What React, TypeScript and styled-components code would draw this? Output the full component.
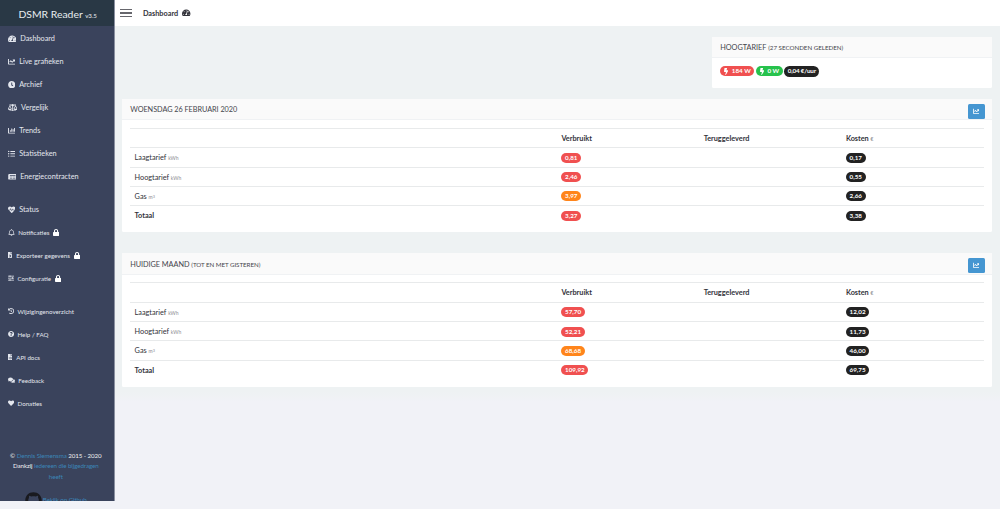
import React from "react";
import styled, { createGlobalStyle } from "styled-components";
import {
  FaTachometerAlt, FaChartLine, FaClock, FaBalanceScale, FaChartBar, FaListUl, FaNewspaper,
  FaHeartbeat, FaRegBell, FaFileExcel, FaHistory, FaQuestionCircle, FaFileCode,
  FaComments, FaHeart, FaLock, FaBolt, FaGithub,
} from "react-icons/fa";

const GlobalStyle = createGlobalStyle`
  *, *::before, *::after { box-sizing: border-box; }
  body {
    margin: 0;
    background: #f1f2f7;
    color: #32323a;
    font-family: Lato, "Open Sans", sans-serif;
    font-size: 7.3px;
    overflow: hidden;
  }
`;

const Page = styled.div`
  display: flex;
  height: 509px;
  align-items: flex-start;
`;

const Sidebar = styled.aside`
  width: 115px;
  height: 500.6px;
  flex: none;
  overflow: hidden;
  border-right: 1px solid #8a90a0;
  background: #3a435c;
  color: #e4e7ee;
`;

const Brand = styled.div`
  height: 26px;
  padding: 1.5px 0 0 1.4px;
  display: flex;
  align-items: baseline;
  justify-content: center;
  line-height: 24px;
  background: #293845;
  color: #e8edf0;
  font-size: 10.4px;
  white-space: pre;
`;

const Version = styled.span`
  font-size: 6.2px;
`;

const Menu = styled.nav<{ $small?: boolean; $gap: number }>`
  margin-top: ${(p) => p.$gap}px;
  font-size: ${(p) => (p.$small ? 6.2 : 7.3)}px;
`;

const MenuItem = styled.a`
  display: flex;
  align-items: center;
  height: 23px;
  padding-left: 7.8px;
  white-space: nowrap;
`;

const IconSlot = styled.span<{ $width: number; $size: number; $ratio: number }>`
  display: flex;
  flex: none;
  width: ${(p) => p.$width}px;
  font-size: ${(p) => p.$size}px;
  svg { flex: none; width: ${(p) => p.$ratio}em; }
`;

const LockSlot = styled.span`
  display: flex;
  margin-left: 3.8px;
  font-size: 7px;
  color: #fff;
  svg { width: 0.875em; }
`;

const Credits = styled.div`
  margin-top: 36px;
  padding-right: 2.4px;
  text-align: center;
  font-size: 6.2px;
  letter-spacing: -0.08px;
  line-height: 10.4px;
  color: #f0f0f2;
`;

const Link = styled.a`
  color: #3a86b8;
`;

const GithubLine = styled.div`
  display: flex;
  justify-content: center;
  align-items: center;
  margin-top: 10px;
  gap: 1px;
  svg { color: #191a1f; }
`;

const Main = styled.main`
  flex: 1;
  min-width: 0;
`;

const TopBar = styled.header`
  display: flex;
  align-items: center;
  height: 26px;
  padding-left: 5.3px;
  background: #fff;
  font-size: 7.3px;
  font-weight: 700;
`;

const Burger = styled.span`
  display: flex;
  flex-direction: column;
  gap: 2px;
  width: 12px;
  margin-right: 10.6px;
  i { height: 1.4px; background: #66666c; }
  i + i { margin-top: 0.4px; }
`;

const TopIcon = styled.span`
  display: flex;
  margin-left: 4.2px;
  font-size: 7.5px;
  svg { width: 1.125em; }
`;

const Content = styled.div`
  display: flex;
  flex-direction: column;
  height: 376px;
  padding: 10.6px 8px 0 7.4px;
  background: linear-gradient(#eef2f3 366px, #f1f2f7);
`;

const Panel = styled.section<{ $height: number; $gap?: number; $narrow?: boolean }>`
  flex: none;
  height: ${(p) => p.$height}px;
  width: ${(p) => (p.$narrow ? "279.6px" : "auto")};
  align-self: ${(p) => (p.$narrow ? "flex-end" : "stretch")};
  margin-bottom: ${(p) => p.$gap ?? 0}px;
  background: #fff;
  border-radius: 1.5px;
`;

const PanelHead = styled.header`
  display: flex;
  align-items: center;
  justify-content: space-between;
  height: 21.7px;
  padding: 0 7.5px 0 7.8px;
  background: #fafafa;
  border-bottom: 1px solid #f0f2f4;
  color: #45454c;
`;

const Title = styled.h2<{ $wide?: boolean }>`
  margin: 0;
  padding-top: 1px;
  font-size: 7.3px;
  font-weight: 400;
  letter-spacing: ${(p) => (p.$wide ? "0" : "-0.04px")};
  small { font-size: 6.2px; }
`;

const ChartButton = styled.button`
  display: flex;
  align-items: center;
  justify-content: center;
  width: 17px;
  height: 15px;
  margin-top: 4.2px;
  padding: 0;
  border: 0;
  border-radius: 1.5px;
  background: #4596d1;
  color: #fff;
  font-size: 6.6px;
`;

const Readings = styled.div`
  display: flex;
  align-items: center;
  gap: 1.6px;
  padding: 7.6px 8px 0;
`;

const Table = styled.div`
  margin: 7.6px 8px 0;
`;

const Row = styled.div<{ $bold?: boolean }>`
  display: grid;
  grid-template-columns: 3fr 1fr 1fr 1fr;
  align-items: center;
  height: 19.3px;
  border-top: 1px solid #e8eaeb;
  font-weight: ${(p) => (p.$bold ? 700 : 400)};
  & + & { padding-top: 0.8px; }
`;

const Cell = styled.div`
  padding-left: 4.2px;
  white-space: nowrap;
`;

const Unit = styled.small`
  font-size: 5px;
  font-weight: 400;
  color: #88888e;
`;

const Cube = styled.span`
  font-size: 3.8px;
  vertical-align: 1.5px;
  line-height: 0;
`;

const Badge = styled.span<{ $color: string; $tall?: boolean }>`
  display: inline-flex;
  align-items: center;
  height: ${(p) => (p.$tall ? 11 : 10)}px;
  padding: 0 ${(p) => (p.$tall ? 3.2 : 3.7)}px;
  border-radius: 6px;
  background: ${(p) => p.$color};
  color: #fff;
  font-size: 6.25px;
  font-weight: 700;
  letter-spacing: ${(p) => (p.$tall ? "-0.14px" : "0")};
  line-height: 1;
  vertical-align: middle;
  white-space: nowrap;
  svg { width: 0.625em; margin-right: 3.4px; font-size: 7px; }
`;

const RED = "#f05050";
const ORANGE = "#ff851b";
const GREEN = "#27c24c";
const BLACK = "#222222";

/* Three tracks with a knob on each */
function Sliders() {
  return (
    <svg viewBox="0 0 16 16" height="1em" fill="currentColor">
      <path d="M0 2h16v2H0zM0 7h16v2H0zM0 12h16v2H0z" />
      <path d="M4 1h2.4v4H4zM10.6 6H13v4h-2.4zM4 11h2.4v4H4z" />
    </svg>
  );
}

/* ratio is the width of the icon relative to its height */
type Item = {
  icon: React.ComponentType;
  label: string;
  slot: number;
  ratio?: number;
  size?: number;
  locked?: boolean;
};

const mainItems: Item[] = [
  { icon: FaTachometerAlt, label: "Dashboard", slot: 12.4, ratio: 1.125 },
  { icon: FaChartLine, label: "Live grafieken", slot: 11.4 },
  { icon: FaClock, label: "Archief", slot: 11.4 },
  { icon: FaBalanceScale, label: "Vergelijk", slot: 13.2, ratio: 1.25 },
  { icon: FaChartBar, label: "Trends", slot: 11.4 },
  { icon: FaListUl, label: "Statistieken", slot: 11.4 },
  { icon: FaNewspaper, label: "Energiecontracten", slot: 12.4, ratio: 1.125 },
];
const statusItems: Item[] = [{ icon: FaHeartbeat, label: "Status", slot: 11.4 }];
const adminItems: Item[] = [
  { icon: FaRegBell, label: "Notificaties", slot: 10.4, size: 7, locked: true },
  { icon: FaFileExcel, label: "Exporteer gegevens", slot: 8.4, ratio: 0.75, locked: true },
  { icon: Sliders, label: "Configuratie", slot: 9.7, locked: true },
];
const infoItems: Item[] = [
  { icon: FaHistory, label: "Wijzigingenoverzicht", slot: 9.6 },
  { icon: FaQuestionCircle, label: "Help / FAQ", slot: 9.7 },
  { icon: FaFileCode, label: "API docs", slot: 8.4, ratio: 0.75 },
  { icon: FaComments, label: "Feedback", slot: 10.4, ratio: 1.125 },
  { icon: FaHeart, label: "Donaties", slot: 9.7 },
];

function MenuGroup({ items, gap, small }: { items: Item[]; gap: number; small?: boolean }) {
  return (
    <Menu $gap={gap} $small={small}>
      {items.map(({ icon: Icon, label, slot, ratio = 1, size, locked }) => (
        <MenuItem key={label}>
          <IconSlot $width={slot} $size={size ?? (small ? 6.2 : 7.5)} $ratio={ratio}>
            <Icon />
          </IconSlot>
          {label}
          {locked && <LockSlot><FaLock /></LockSlot>}
        </MenuItem>
      ))}
    </Menu>
  );
}

type UsageProps = {
  title: string;
  note?: string;
  height: number;
  gap?: number;
  rows: [string, string][];
};

const labels = [
  <>Laagtarief <Unit>kWh</Unit></>,
  <>Hoogtarief <Unit>kWh</Unit></>,
  <>Gas <Unit>m<Cube>3</Cube></Unit></>,
  <>Totaal</>,
];

function UsagePanel({ title, note, height, gap, rows }: UsageProps) {
  return (
    <Panel $height={height} $gap={gap}>
      <PanelHead>
        <Title>{title} {note && <small>{note}</small>}</Title>
        <ChartButton><FaChartLine /></ChartButton>
      </PanelHead>
      <Table>
        <Row $bold>
          <Cell />
          <Cell>Verbruikt</Cell>
          <Cell>Teruggeleverd</Cell>
          <Cell>Kosten <Unit>€</Unit></Cell>
        </Row>
        {rows.map(([used, cost], i) => (
          <Row key={i} $bold={i === 3}>
            <Cell>{labels[i]}</Cell>
            <Cell><Badge $color={i === 2 ? ORANGE : RED}>{used}</Badge></Cell>
            <Cell />
            <Cell><Badge $color={BLACK}>{cost}</Badge></Cell>
          </Row>
        ))}
      </Table>
    </Panel>
  );
}

export default function App() {
  return (
    <>
      <GlobalStyle />
      <Page>
        <Sidebar>
          <Brand>DSMR Reader <Version>v3.5</Version></Brand>
          <MenuGroup items={mainItems} gap={0.8} />
          <MenuGroup items={statusItems} gap={10} />
          <MenuGroup items={adminItems} gap={0} small />
          <MenuGroup items={infoItems} gap={10} small />
          <Credits>
            © <Link>Dennis Siemensma</Link> 2015 - 2020<br />
            Dankzij <Link>iedereen die bijgedragen<br />heeft</Link>
            <GithubLine><FaGithub size={17} /><Link>Bekijk op Github</Link></GithubLine>
          </Credits>
        </Sidebar>
        <Main>
          <TopBar>
            <Burger><i /><i /><i /></Burger>
            Dashboard
            <TopIcon><FaTachometerAlt /></TopIcon>
          </TopBar>
          <Content>
            <Panel $height={51.3} $gap={10.8} $narrow>
              <PanelHead><Title $wide>HOOGTARIEF <small>(27 SECONDEN GELEDEN)</small></Title></PanelHead>
              <Readings>
                <Badge $color={RED}><FaBolt /> 184 W</Badge>
                <Badge $color={GREEN}><FaBolt /> 0 W</Badge>
                <Badge $color={BLACK} $tall>0,04 €/uur</Badge>
              </Readings>
            </Panel>
            <UsagePanel
              title="WOENSDAG 26 FEBRUARI 2020"
              height={133.3}
              gap={21.2}
              rows={[["0,81", "0,17"], ["2,46", "0,55"], ["3,97", "2,66"], ["3,27", "3,38"]]}
            />
            <UsagePanel
              title="HUIDIGE MAAND"
              note="(TOT EN MET GISTEREN)"
              height={133.5}
              rows={[["57,70", "12,02"], ["52,21", "11,73"], ["68,68", "46,00"], ["109,92", "69,75"]]}
            />
          </Content>
        </Main>
      </Page>
    </>
  );
}
